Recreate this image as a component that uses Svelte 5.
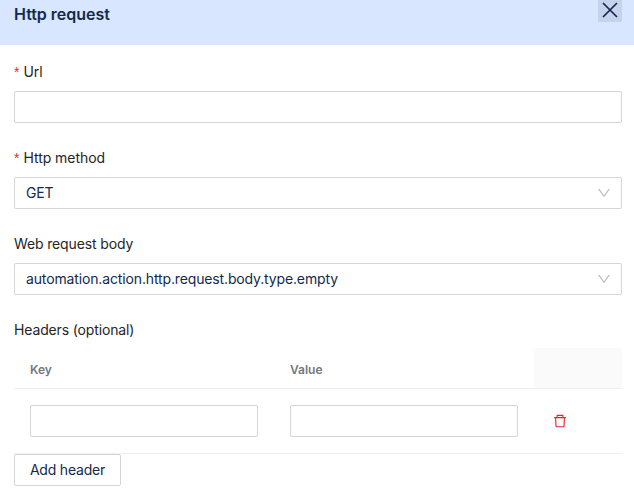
<script>
  let url = $state('');
  let headers = $state([{ key: '', value: '' }]);
  const addHeader = () => headers.push({ key: '', value: '' });
  const removeHeader = (i) => headers.splice(i, 1);
</script>

{#snippet chevron()}
  <svg class="chevron" viewBox="64 64 896 896" width="14" height="14" fill="currentColor" aria-hidden="true">
    <path d="M884 256h-75c-5.1 0-9.9 2.5-12.9 6.6L512 654.2 227.9 262.6c-3-4.1-7.8-6.6-12.9-6.6h-75c-6.5 0-10.3 7.4-6.5 12.7l352.6 486.1c12.8 17.6 39 17.6 51.7 0l352.6-486.1c3.9-5.3.1-12.7-6.4-12.7z" />
  </svg>
{/snippet}

<section class="panel">
  <header class="title-bar">
    <h1>Http request</h1>
    <button class="close" aria-label="Close">
      <svg viewBox="0 0 24 24" width="24" height="24" fill="none" stroke="#14294b" stroke-width="1.7">
        <path d="M5 5 19 19M19 5 5 19" />
      </svg>
    </button>
  </header>

  <form>
    <div class="field">
      <label class="required" for="url"><span>Url</span></label>
      <input id="url" bind:value={url} />
    </div>
    <div class="field">
      <div class="label required"><span>Http method</span></div>
      <div class="select"><span>GET</span>{@render chevron()}</div>
    </div>
    <div class="field">
      <div class="label"><span>Web request body</span></div>
      <div class="select"><span>automation.action.http.request.body.type.empty</span>{@render chevron()}</div>
    </div>
    <div class="headers">
      <div class="label"><span>Headers (optional)</span></div>
      <div class="row head">
        <div class="cell">Key</div>
        <div class="cell">Value</div>
        <div class="cell actions"></div>
      </div>
      {#each headers as header, i}
        <div class="row">
          <div class="cell"><input aria-label="Key" bind:value={header.key} /></div>
          <div class="cell"><input aria-label="Value" bind:value={header.value} /></div>
          <div class="cell">
            <button type="button" class="remove" aria-label="Delete" onclick={() => removeHeader(i)}>
              <svg viewBox="64 64 896 896" width="14" height="14" fill="currentColor">
                <path d="M360 184h-8c4.4 0 8-3.6 8-8v8h304v-8c0 4.4 3.6 8 8 8h-8v72h72v-80c0-35.3-28.7-64-64-64H352c-35.3 0-64 28.7-64 64v80h72v-72zm504 72H160c-17.7 0-32 14.3-32 32v32c0 4.4 3.6 8 8 8h60.4l24.7 523c1.6 34.1 29.8 61 63.9 61h454c34.2 0 62.3-26.8 63.9-61l24.7-523H888c4.4 0 8-3.6 8-8v-32c0-17.7-14.3-32-32-32zM731.3 840H292.7l-24.2-512h487l-24.2 512z" />
              </svg>
            </button>
          </div>
        </div>
      {/each}
      <button type="button" class="add" onclick={addHeader}>Add header</button>
    </div>
  </form>
</section>

<style>
  :global(body) {
    margin: 0;
    background: #fff;
    overflow: hidden;
  }
  .panel {
    height: 495px;
    font: 14px/22px Inter, 'Liberation Sans', sans-serif;
    letter-spacing: -0.14px;
    color: #252525;
  }
  .panel * {
    box-sizing: border-box;
  }
  .title-bar {
    display: flex;
    justify-content: space-between;
    align-items: flex-start;
    height: 45px;
    padding: 0 12px 0 14px;
    background: #d8e6ff;
  }
  h1 {
    margin: 3px 0 0;
    font-size: 16px;
    line-height: 22px;
    font-weight: 600;
    letter-spacing: -0.03px;
    color: #14294b;
  }
  button {
    font: inherit;
    letter-spacing: inherit;
    cursor: pointer;
  }
  .close {
    display: flex;
    width: 24px;
    height: 24px;
    margin-top: -2px;
    padding: 0;
    border: 0;
    background: #c5d4ec;
  }
  form {
    padding: 16px 12px 0 14px;
  }
  .field {
    height: 86px;
  }
  label,
  .label {
    display: flex;
    align-items: center;
    height: 22px;
    margin-bottom: 8px;
  }
  .required {
    letter-spacing: -0.05px;
  }
  .required::before {
    content: '*';
    margin-right: 4px;
    color: #f5222d;
    font: 14px/14px 'Liberation Sans', sans-serif;
  }
  input,
  .select {
    display: block;
    width: 100%;
    height: 32px;
    border: 1px solid #d5d5d5;
    border-radius: 2px;
    background: #fff;
    font: inherit;
    color: #14294b;
  }
  input {
    padding: 4px 11px;
    outline: none;
  }
  .select {
    display: flex;
    align-items: center;
    justify-content: space-between;
    padding: 0 10px 0 11px;
  }
  .chevron {
    color: #bfbfbf;
  }
  .headers .label {
    margin-bottom: 7px;
  }
  .row {
    display: grid;
    grid-template-columns: 260px 260px 1fr;
    height: 65px;
    border-bottom: 1px solid #f0f0f0;
  }
  .cell {
    display: flex;
    align-items: center;
    padding: 0 16px;
  }
  .head {
    height: 41px;
    font-size: 12px;
    font-weight: 600;
    letter-spacing: 0;
    color: #73777f;
  }
  .head .cell {
    padding-top: 3px;
  }
  .actions {
    background: #fafafa;
    border-radius: 2px 2px 0 0;
  }
  .remove {
    display: flex;
    padding: 0 3px;
    border: 0;
    background: none;
    color: #e5252a;
  }
  .add {
    width: 107px;
    height: 32px;
    padding: 0;
    border: 1px solid #d5d5d5;
    border-radius: 2px;
    background: #fff;
    letter-spacing: -0.2px;
    color: #14294b;
  }
</style>
